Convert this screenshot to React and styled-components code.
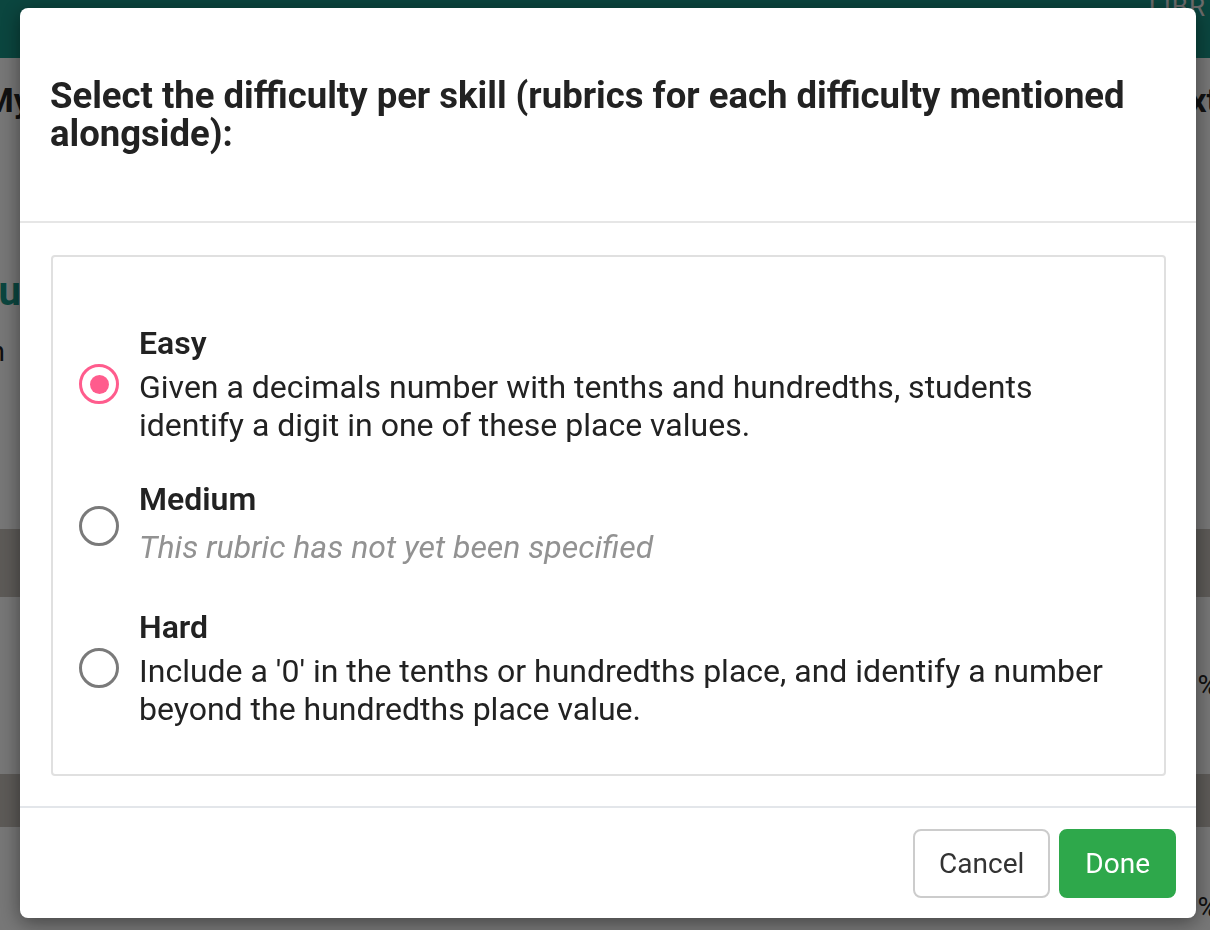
import React, { useState } from 'react';
import styled, { createGlobalStyle } from 'styled-components';

const GlobalStyle = createGlobalStyle`
  html, body {
    margin: 0;
    padding: 0;
    height: 100%;
    overflow: hidden;
  }
  body {
    font-family: Roboto, "Liberation Sans", Arial, sans-serif;
    background: #eeeeee;
  }
`;

const Page = styled.div`
  width: 1210px;
  height: 930px;
  background: #eeeeee;
  overflow: hidden;
`;

const TopBar = styled.div`
  height: 58px;
  background: #168c7e;
  display: flex;
  justify-content: flex-end;
  align-items: flex-start;
  padding-right: 4px;
  color: #d8d8d8;
  font-size: 26px;
  letter-spacing: 1px;
  overflow: hidden;
  line-height: 14px;
`;

const PageBody = styled.div`
  display: flex;
  flex-direction: column;
`;

const PageHeading = styled.div`
  display: flex;
  justify-content: space-between;
  padding-top: 22px;
  margin-left: -16px;
  margin-right: -8px;
  font-size: 34px;
  font-weight: 700;
  color: #222;
  height: 60px;
`;

const Subject = styled.div`
  margin-top: 130px;
  margin-left: -29px;
  font-size: 40px;
  font-weight: 700;
  color: #168c7e;
  line-height: 44px;
`;

const SubjectNote = styled.div`
  margin-top: 18px;
  margin-left: -18px;
  font-size: 28px;
  color: #222;
  line-height: 40px;
`;

const TableHead = styled.div`
  margin-top: ${p => p.$offset || 0}px;
  height: ${p => p.$height}px;
  background: #bab5af;
`;

const TableRow = styled.div`
  height: ${p => p.$height}px;
  display: flex;
  justify-content: flex-end;
  align-items: center;
  font-size: 28px;
  color: #222;
  margin-right: -8px;
`;

const Overlay = styled.div`
  position: fixed;
  inset: 0;
  background: rgba(0, 0, 0, 0.5);
  display: flex;
  align-items: flex-start;
  padding: 8px 14px 12px 20px;
`;

const Modal = styled.div`
  width: 1176px;
  height: 910px;
  background: #fff;
  border-radius: 8px;
  box-shadow: 0 4px 20px rgba(0, 0, 0, 0.45);
  display: flex;
  flex-direction: column;
  overflow: hidden;
`;

const ModalHeader = styled.div`
  padding: 69px 30px 68px;
  border-bottom: 2px solid #e6e6e6;
`;

const Title = styled.h2`
  margin: 0;
  font-size: 36.5px;
  line-height: 38px;
  font-weight: 700;
  color: #222;
`;

const ModalBody = styled.div`
  padding: 32px 30px 30px 31px;
  border-bottom: 2px solid #e3e6ea;
`;

const OptionBox = styled.div`
  border: 2px solid #e0e0e0;
  border-radius: 4px;
  padding: 67px 30px 46px 26px;
  display: flex;
  flex-direction: column;
  gap: 36px;
`;

const Option = styled.label`
  display: flex;
  align-items: center;
  gap: 20px;
  cursor: pointer;
`;

const Radio = styled.span`
  flex: none;
  width: 40px;
  height: 40px;
  box-sizing: border-box;
  border-radius: 50%;
  border: 3.5px solid ${p => (p.$checked ? '#ff5c8d' : '#7a7a7a')};
  display: flex;
  align-items: center;
  justify-content: center;

  &::after {
    content: '';
    width: 19px;
    height: 19px;
    border-radius: 50%;
    background: #ff5c8d;
    display: ${p => (p.$checked ? 'block' : 'none')};
  }
`;

const OptionText = styled.div`
  display: flex;
  flex-direction: column;
  gap: 6px;
`;

const OptionLabel = styled.div`
  font-size: 32px;
  line-height: 38px;
  font-weight: 600;
  color: #222;
`;

const OptionRubric = styled.div`
  font-size: 32px;
  line-height: 38px;
  color: ${p => (p.$empty ? '#929292' : '#222')};
  font-style: ${p => (p.$empty ? 'italic' : 'normal')};
  margin: ${p => (p.$empty ? '4px 0 6px' : '0')};
`;

const ModalFooter = styled.div`
  flex: 1;
  display: flex;
  justify-content: flex-end;
  align-items: center;
  gap: 9px;
  padding: 0 20px;
`;

const Button = styled.button`
  height: 69px;
  padding: 0 24px;
  font-family: inherit;
  font-size: 28px;
  border-radius: 8px;
  cursor: pointer;
  border: 2px solid ${p => (p.$primary ? '#2ea84b' : '#cccccc')};
  background: ${p => (p.$primary ? '#2ea84b' : '#fff')};
  color: ${p => (p.$primary ? '#fff' : '#333')};
`;

const levels = [
  {
    id: 'easy',
    label: 'Easy',
    rubric:
      'Given a decimals number with tenths and hundredths, students identify a digit in one of these place values.',
  },
  { id: 'medium', label: 'Medium', rubric: null },
  {
    id: 'hard',
    label: 'Hard',
    rubric:
      "Include a '0' in the tenths or hundredths place, and identify a number beyond the hundredths place value.",
  },
];

export default function App() {
  const [selected, setSelected] = useState('easy');

  return (
    <>
      <GlobalStyle />
      <Page>
        <TopBar>LIBR</TopBar>
        <PageBody>
          <PageHeading>
            <span>My</span>
            <span>xt</span>
          </PageHeading>
          <Subject>Quiz</Subject>
          <SubjectNote>In</SubjectNote>
          <TableHead $offset={157} $height={68} />
          <TableRow $height={177}>%</TableRow>
          <TableHead $height={53} />
          <TableRow $height={160}>%</TableRow>
        </PageBody>
      </Page>
      <Overlay>
        <Modal>
          <ModalHeader>
            <Title>
              Select the difficulty per skill (rubrics for each difficulty mentioned
              alongside):
            </Title>
          </ModalHeader>
          <ModalBody>
            <OptionBox>
              {levels.map(level => (
                <Option key={level.id} onClick={() => setSelected(level.id)}>
                  <Radio $checked={selected === level.id} />
                  <OptionText>
                    <OptionLabel>{level.label}</OptionLabel>
                    <OptionRubric $empty={!level.rubric}>
                      {level.rubric || 'This rubric has not yet been specified'}
                    </OptionRubric>
                  </OptionText>
                </Option>
              ))}
            </OptionBox>
          </ModalBody>
          <ModalFooter>
            <Button>Cancel</Button>
            <Button $primary>Done</Button>
          </ModalFooter>
        </Modal>
      </Overlay>
    </>
  );
}
